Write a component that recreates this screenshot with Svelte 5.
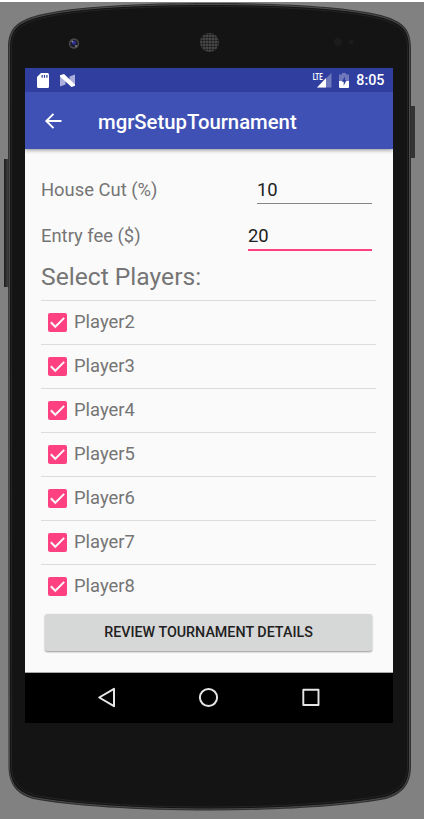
<script>
  let players = $state([2, 3, 4, 5, 6, 7, 8].map((n) => ({ name: `Player${n}`, checked: true })));
  let houseCut = $state('10');
  let entryFee = $state('20');
</script>

<div class="stage">
  <svg class="shell" width="424" height="819" viewBox="0 0 424 819" aria-hidden="true">
    <defs>
      <linearGradient id="key" x1="0" x2="1">
        <stop offset="0" stop-color="#1c1c1d" />
        <stop offset="1" stop-color="#4a4a4c" />
      </linearGradient>
      <pattern id="mesh" width="3" height="3" patternUnits="userSpaceOnUse">
        <rect width="3" height="3" fill="#484848" />
        <circle cx="1.500" cy="1.500" r="1.100" fill="#181818" />
      </pattern>
    </defs>
    <rect width="424" height="2" fill="#fff" />
    <rect x="4" y="159" width="5" height="128" fill="url(#key)" />
    <rect x="410" y="106" width="5" height="52" fill="#343435" />
    <path
      d="M8 48C8 28 17 21 38 15C75 6 140 3 209.500 3C279 3 344 6 381 15C402 21 411 28 411 48V766C411 785 402 794 386 799C350 806 280 810.500 209.500 810.500C139 810.500 69 806 33 799C17 794 8.500 785 8.500 766Z"
      fill="#303031"
    />
    <path
      d="M9.500 48C9.500 29 18 22.500 39 16.500C76 7.500 140 4.500 209.500 4.500C279 4.500 343 7.500 380 16.500C401 22.500 409.500 29 409.500 48V766C409.500 784 401 792.500 385 797.500C349 804.500 280 809 209.500 809C139 809 70 804.500 34 797.500C18 792.500 9.500 784 9.500 766Z"
      fill="#141414"
      stroke="#4c4c4e"
      stroke-width="1"
    />
    <path
      d="M11.500 48C11.500 31 20 24.500 40 18.500C77 9.500 140 6.500 209.500 6.500C279 6.500 342 9.500 379 18.500C399 24.500 407.500 31 407.500 48V766C407.500 782 399 790.500 383 795.500C347 802.500 280 807 209.500 807C139 807 72 802.500 36 795.500C20 790.500 11.500 782 11.500 766Z"
      fill="#141414"
      stroke="#242425"
      stroke-width="1"
    />
    <circle cx="74" cy="43.500" r="5.200" fill="#484848" />
    <circle cx="74" cy="43.500" r="3.600" fill="#18182c" />
    <circle cx="74" cy="42.800" r="2" fill="#333195" />
    <circle cx="72.300" cy="41.500" r="1" fill="#8b8ba2" />
    <circle cx="76" cy="46" r="1" fill="#898989" />
    <circle cx="209.500" cy="42.500" r="9.500" fill="url(#mesh)" />
    <circle cx="338" cy="42" r="4" fill="#1c1c1c" />
    <circle cx="351" cy="42" r="2.500" fill="#1c1c1c" />
  </svg>

  <main class="screen">
    <div class="status">
      <svg class="sd" width="12" height="15" viewBox="0 0 12 15">
        <path d="M4 0H10.500Q12 0 12 1.500V13.500Q12 15 10.500 15H1.500Q0 15 0 13.500V4Z" fill="#fff" />
        <path d="M5.200 2V4.800M7.500 2V4.800M9.900 2V4.800" stroke="#303f9f" stroke-width="1.200" />
      </svg>
      <svg class="nougat" width="15" height="13" viewBox="0 0 15 13">
        <path d="M0 1.300L5.500 4V10.500L0 12.500ZM9.500 2.500L15 0.500V12L9.500 9Z" fill="#a9aedb" />
        <path d="M0 1.300L4 0L15 10.500V11.800L11.500 13L0 2.500Z" fill="#fff" />
      </svg>
      <svg class="signal" width="19" height="16" viewBox="0 0 19 16">
        <path d="M18.500 1V15.500H4Z" fill="#6e78bb" />
        <path d="M13 6V15.500H4Z" fill="#fff" />
        <path d="M0 0H10.500V6.500L8.500 8.500H0Z" fill="#303f9f" />
        <g transform="scale(0.650 1)"><text x="-0.500" y="7.800">LTE</text></g>
      </svg>
      <svg class="battery" width="10" height="15" viewBox="0 0 10 15">
        <path d="M3 0H7V1.500H10V8H0V1.500H3Z" fill="#6e78bb" />
        <path d="M0 8H10V14Q10 15 9 15H1Q0 15 0 14Z" fill="#fff" />
        <path d="M6 3.500L2.800 8.800H4.700V12.800L7.500 7.300H6Z" fill="#303f9f" />
      </svg>
      <span class="clock">8:05</span>
    </div>

    <header>
      <svg width="18" height="18" viewBox="0 0 18 18" fill="none" stroke="#fff" stroke-width="1.900">
        <path d="M17.500 9H2.500M9.500 1.800L2.300 9L9.500 16.200" />
      </svg>
      <h1>mgrSetupTournament</h1>
    </header>

    <section class="content">
      <label class="field cut">
        <span>House Cut (%)</span>
        <input bind:value={houseCut} />
      </label>
      <label class="field fee">
        <span>Entry fee ($)</span>
        <input bind:value={entryFee} />
      </label>
      <h2>Select Players:</h2>
      <ul>
        {#each players as player}
          <li>
            <button class="check" class:off={!player.checked} aria-label={player.name} onclick={() => (player.checked = !player.checked)}>
              <svg width="19" height="19" viewBox="0 0 19 19" fill="none" stroke="#fafafa" stroke-width="2">
                <path d="M2.800 9.300L7.300 13.800L16.200 4.900" />
              </svg>
            </button>
            <span>{player.name}</span>
          </li>
        {/each}
      </ul>
      <button class="review">REVIEW TOURNAMENT DETAILS</button>
    </section>

    <nav>
      <svg width="368" height="50" viewBox="0 0 368 50" fill="none" stroke="#e6e6e6" stroke-width="2" stroke-linejoin="round">
        <path d="M89 15.800V33.200L74.200 24.500Z" />
        <circle cx="183.500" cy="24.500" r="8.600" />
        <rect x="278.300" y="16.800" width="15.200" height="15.200" stroke-width="1.900" />
      </svg>
    </nav>
  </main>
</div>

<style>
  :global(body) {
    margin: 0;
    overflow: hidden;
  }
  .stage {
    position: relative;
    box-sizing: border-box;
    width: 424px;
    height: 819px;
    padding: 68px 31px 0 25px;
    background: #818181;
    font-family: Roboto, sans-serif;
  }
  .shell {
    position: absolute;
    inset: 0;
  }
  .screen {
    position: relative;
    display: flex;
    flex-direction: column;
    width: 368px;
    height: 655px;
    background: #fafafa;
  }
  svg {
    display: block;
    flex: none;
  }
  .status {
    display: flex;
    align-items: center;
    height: 24px;
    box-sizing: border-box;
    padding: 0 8.500px 0 12px;
    background: #303f9f;
  }
  .nougat {
    margin-left: 11px;
  }
  .signal {
    margin-left: auto;
    overflow: visible;
  }
  .signal text {
    font: 700 9.500px Roboto, sans-serif;
    fill: #fff;
  }
  .battery {
    margin-left: 7px;
  }
  .clock {
    margin-left: 7.500px;
    color: #fff;
    font-size: 14.300px;
    font-weight: 500;
    line-height: 24px;
  }
  header {
    display: flex;
    align-items: center;
    height: 57px;
    padding-left: 19px;
    background: #3f51b5;
    box-shadow: 0 1px 4px rgba(0, 0, 0, 0.45);
    clip-path: inset(0 0 -6px 0);
  }
  h1 {
    margin: 2px 0 0 36px;
    color: #fff;
    font-size: 20.300px;
    font-weight: 500;
    line-height: 24px;
  }
  .content {
    flex: 1;
    display: flex;
    flex-direction: column;
    padding: 18px 17px 0 16px;
    border-bottom: 1px solid #aaa;
    color: #757575;
  }
  .field {
    display: flex;
    justify-content: space-between;
    height: 46px;
    padding-right: 4px;
    font-size: 18.400px;
    line-height: 46px;
  }
  input {
    box-sizing: border-box;
    height: 37px;
    padding: 9px 0 0;
    border: 0;
    border-bottom: 1px solid #858585;
    border-radius: 0;
    outline: 0;
    background: none;
    color: #212121;
    font: 18.400px/27px Roboto, sans-serif;
  }
  .cut input {
    width: 115px;
  }
  .fee input {
    width: 124px;
    height: 38px;
    border-bottom: 2px solid #ff4081;
  }
  h2 {
    margin: 0;
    height: 41px;
    font-size: 24.650px;
    font-weight: 400;
    line-height: 35px;
  }
  ul {
    margin: 0;
    padding: 0;
    list-style: none;
  }
  li {
    display: flex;
    align-items: center;
    box-sizing: border-box;
    height: 44px;
    padding: 0 0 2px 7px;
    border-top: 1px solid #dcdcdc;
    font-size: 18.400px;
  }
  .check {
    width: 19px;
    height: 19px;
    margin: 2px 7px 0 0;
    padding: 0;
    border: 0;
    border-radius: 2px;
    background: #ff4081;
  }
  .off {
    background: #757575;
  }
  .review {
    flex: none;
    height: 37px;
    margin: 6px 4px 0;
    padding: 0;
    border: 0;
    border-radius: 2px;
    background: #d6d7d7;
    box-shadow: 0 1px 2px rgba(0, 0, 0, 0.4);
    color: #212121;
    font: 500 14.300px/37px Roboto, sans-serif;
  }
  nav {
    height: 50px;
    background: #000;
  }
</style>
